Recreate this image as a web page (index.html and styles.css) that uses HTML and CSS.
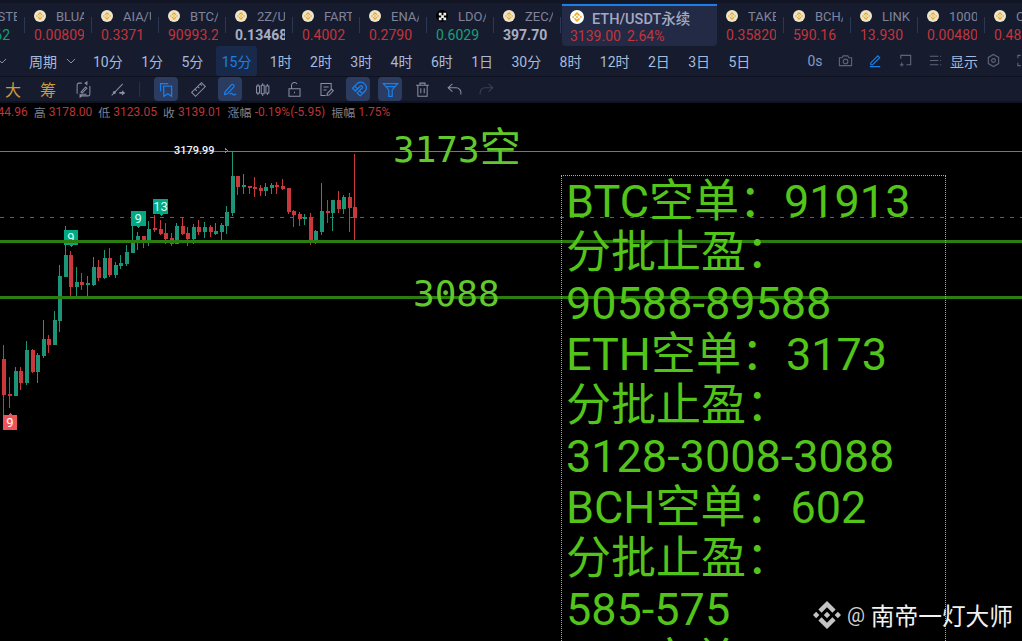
FILE: index.html
```html
<!DOCTYPE html>
<html lang="zh-CN">
<head>
  <meta charset="UTF-8" />
  <title>ETH/USDT永续</title>
  <link rel="stylesheet" href="styles.css">
</head>
<body>
  <svg class="defs" width="0" height="0">
    <symbol id="bnb" viewBox="0 0 126.61 126.61">
      <path d="M38.73 53.2l24.59-24.58 24.6 24.6 14.3-14.31L63.32 0 24.42 38.9zM0 63.31l14.3-14.31 14.31 14.31-14.31 14.3zM38.73 73.41l24.59 24.59 24.6-24.6 14.31 14.29-38.9 38.91-38.91-38.88zM98 63.31l14.3-14.31 14.31 14.3-14.31 14.32zM77.83 63.3L63.32 48.78 52.59 59.51l-1.24 1.23-2.54 2.54 14.51 14.5 14.51-14.52z"/>
    </symbol>
  </svg>

  <!-- coin tabs -->
  <div class="tabs">
    <div class="coin first"><div class="coin-top"><span class="dot"><svg><use href="#bnb"/></svg></span><span class="name">USTE/USDT</span></div><div class="price up">0.3462</div></div>
    <i class="sep"></i>
    <div class="coin"><div class="coin-top"><span class="dot"><svg><use href="#bnb"/></svg></span><span class="name">BLUAI/USDT</span></div><div class="price down">0.00809</div></div>
    <i class="sep"></i>
    <div class="coin"><div class="coin-top"><span class="dot"><svg><use href="#bnb"/></svg></span><span class="name">AIA/USDT</span></div><div class="price down">0.3371</div></div>
    <i class="sep"></i>
    <div class="coin"><div class="coin-top"><span class="dot"><svg><use href="#bnb"/></svg></span><span class="name">BTC/USDT</span></div><div class="price down">90993.2</div></div>
    <i class="sep"></i>
    <div class="coin"><div class="coin-top"><span class="dot"><svg><use href="#bnb"/></svg></span><span class="name">2Z/USDT</span></div><div class="price flat">0.13468</div></div>
    <i class="sep"></i>
    <div class="coin"><div class="coin-top"><span class="dot"><svg><use href="#bnb"/></svg></span><span class="name">FARTCOIN</span></div><div class="price down">0.4002</div></div>
    <i class="sep"></i>
    <div class="coin"><div class="coin-top"><span class="dot"><svg><use href="#bnb"/></svg></span><span class="name">ENA/USDT</span></div><div class="price down">0.2790</div></div>
    <i class="sep"></i>
    <div class="coin"><div class="coin-top"><span class="dot dark"><svg viewBox="0 0 12 12"><path d="M2 2h3v3H2zM7 2h3v3H7zM2 7h3v3H2zM7 7h3v3H7zM4.500 4.500h3v3h-3z"/></svg></span><span class="name">LDO/USDT</span></div><div class="price up">0.6029</div></div>
    <i class="sep"></i>
    <div class="coin"><div class="coin-top"><span class="dot"><svg><use href="#bnb"/></svg></span><span class="name">ZEC/USDT</span></div><div class="price flat">397.70</div></div>
    <i class="sep"></i>
    <div class="coin-active">
      <div class="coin-top"><span class="dot white"><svg><use href="#bnb"/></svg></span><span class="active-name">ETH/USDT永续</span></div>
      <div class="active-price"><span>3139.00</span><span>2.64%</span></div>
    </div>
    <div class="coin"><div class="coin-top"><span class="dot"><svg><use href="#bnb"/></svg></span><span class="name">TAKE/USDT</span></div><div class="price down">0.35820</div></div>
    <i class="sep"></i>
    <div class="coin"><div class="coin-top"><span class="dot"><svg><use href="#bnb"/></svg></span><span class="name">BCH/USDT</span></div><div class="price down">590.16</div></div>
    <i class="sep"></i>
    <div class="coin"><div class="coin-top"><span class="dot"><svg><use href="#bnb"/></svg></span><span class="name">LINK/USDT</span></div><div class="price down">13.930</div></div>
    <i class="sep"></i>
    <div class="coin"><div class="coin-top"><span class="dot"><svg><use href="#bnb"/></svg></span><span class="name">1000PEPE</span></div><div class="price down">0.00480</div></div>
    <i class="sep"></i>
    <div class="coin"><div class="coin-top"><span class="dot"><svg><use href="#bnb"/></svg></span><span class="name">OP/USDT</span></div><div class="price down">0.4812</div></div>
  </div>

  <!-- period bar -->
  <div class="periods">
    <svg class="chev cut" viewBox="0 0 10 10"><path d="M1 3l4 4 4-4"/></svg>
    <span class="period-label">周期</span>
    <svg class="chev" viewBox="0 0 10 10"><path d="M1 3l4 4 4-4"/></svg>
    <div class="period-list">
      <span class="period">10分</span>
      <span class="period">1分</span>
      <span class="period">5分</span>
      <span class="period on">15分</span>
      <span class="period">1时</span>
      <span class="period">2时</span>
      <span class="period">3时</span>
      <span class="period">4时</span>
      <span class="period">6时</span>
      <span class="period">1日</span>
      <span class="period">30分</span>
      <span class="period">8时</span>
      <span class="period">12时</span>
      <span class="period">2日</span>
      <span class="period">3日</span>
      <span class="period">5日</span>
    </div>
    <div class="period-right">
      <span class="rbtn blue-text">0s</span>
      <span class="rbtn"><svg viewBox="0 0 16 16"><path d="M1.500 5h3l1-2h5l1 2h3v8.500h-13z"/><circle cx="8" cy="9" r="2.500"/></svg></span>
      <span class="rbtn blue"><svg viewBox="0 0 16 16"><path d="M3 10.500L10.500 3l2 2L5 12.500H3zM2 14.500h11"/></svg></span>
      <span class="rbtn"><svg viewBox="0 0 16 16"><path d="M5 2.500h8.500v10H9M4 10v4.500M2 12.500h4M3 6V2.500h2"/></svg></span>
      <span class="rbtn"><svg viewBox="0 0 16 16"><path d="M2 3.500h9M2 8h9M2 12.500h9M13 3.500h1M13 8h1M13 12.500h1"/></svg></span>
      <span class="rbtn blue-text big">显示</span>
      <span class="rbtn"><svg viewBox="0 0 16 16"><path d="M8 1.500l5.500 3.200v6.600L8 14.500l-5.500-3.200V4.700z"/><circle cx="8" cy="8" r="2"/></svg></span>
      <span class="rbtn"><svg viewBox="0 0 16 16"><path d="M2 5.500V2.500h3M14 5.500V2.500h-3M2 10.500v3h3"/></svg></span>
    </div>
  </div>

  <!-- drawing tools -->
  <div class="tools">
    <div class="tools-left">
      <span class="tool gold">大</span>
      <span class="tool gold">筹</span>
      <span class="tool"><svg viewBox="0 0 20 20"><path d="M8 2.500H4.500a2 2 0 0 0-2 2V15M12 2.500l2-1.500v3zM17.500 6v9.500a2 2 0 0 1-2 2H6M8 17.500l-2 1.500v-3zM7 13l5.500-6 1.500 1.500L8.500 14zM7 15.500h6.500"/></svg></span>
      <span class="tool"><svg viewBox="0 0 20 20"><path d="M2 17L15 3.500"/><circle cx="5" cy="13.500" r="1.200"/><path class="solid" d="M11 13h3v-2l4 3-4 3v-2h-3z"/></svg></span>
    </div>
    <i class="tool-sep"></i>
    <div class="tools-right">
      <span class="tool on blue"><svg viewBox="0 0 20 20"><path d="M3 12V3h9M6.500 6H16v12l-4.500-3L7 18z"/></svg></span>
      <span class="tool"><svg viewBox="0 0 20 20"><path d="M2 13.500L13.500 2 18 6.500 6.500 18zM6 9.500l2 2M9 6.500l2 2M12 3.500l2 2"/></svg></span>
      <span class="tool on blue"><svg viewBox="0 0 20 20"><path d="M3.500 13L11 4.500a2 2 0 0 1 3 2.500L6.500 15l-3.500 1zM9 15.500c2-1.500 3-1 3.500 0s2 1.500 4-.5"/></svg></span>
      <span class="tool"><svg viewBox="0 0 20 20"><path d="M3 6h3.500v8H3zM8.500 5H12v10H8.500zM14 6h3.500v8H14zM4.700 3.500V6M4.700 14v2.500M10.200 2.500V5M10.200 15v2.500M15.700 3.500V6M15.700 14v2.500"/></svg></span>
      <span class="tool"><svg viewBox="0 0 20 20"><path d="M3.500 9h13v9h-13zM6.500 9V5a3.500 3.500 0 0 1 6.500-1.500M10 12.500v2"/></svg></span>
      <span class="tool"><svg viewBox="0 0 20 20"><path d="M9 17H3.500V3h12v6M6.500 7h6M6.500 10.500h3.500M10.500 17l.5-2.500 5-5 2 2-5 5z"/></svg></span>
      <span class="tool on blue"><svg viewBox="0 0 20 20"><path d="M3 8.500L9 2.500a6.500 6.500 0 0 1 9 9l-6 6-3.500-3.500 6-6a1.600 1.600 0 0 0-2.200-2.200l-6 6zM5.500 6l3.500 3.500M11.500 12l3.500 3"/></svg></span>
      <span class="tool on blue"><svg viewBox="0 0 20 20"><path d="M1.500 3h17l-6.500 7.500V18h-4v-7.500zM5 6.500h10"/></svg></span>
      <span class="tool"><svg viewBox="0 0 20 20"><path d="M2.500 5h15M7 5V2.500h6V5M4.500 5v13h11V5M8 8.500v6M12 8.500v6"/></svg></span>
      <span class="tool"><svg viewBox="0 0 20 20"><path d="M7.500 3.500L2.500 8l5 4.500M2.500 8H12a5.500 5.500 0 0 1 5.500 6v2"/></svg></span>
      <span class="tool dim"><svg viewBox="0 0 20 20"><path d="M12.500 3.500L17.500 8l-5 4.500M17.500 8H8a5.500 5.500 0 0 0-5.500 6v2"/></svg></span>
    </div>
  </div>

  <!-- ohlc line -->
  <div class="ohlc">
    <b>3144.96</b><span>高</span><b>3178.00</b><span>低</span><b>3123.05</b><span>收</span><b>3139.01</b><span>涨幅</span><b>-0.19%(-5.95)</b><span>振幅</span><b>1.75%</b>
  </div>

  <!-- chart -->
  <div class="chart">
    <svg class="plot" viewBox="0 118 1022 523" width="1022" height="523">
      <path class="last-line" d="M0 151.500H1022"/>
      <path class="now-line" d="M0 217.500H1022"/>

      <path class="wick red" d="M3.500 345V430M9.500 377V408M20.500 367V390M32.500 349V373M48.500 335V353M70.500 251V296M81.500 273V290M98.500 260V281M109.500 248V277M143.500 236V248M154.500 215V232M160.500 220V235M165.500 223V244M171.500 233V246M182.500 217V235M187.500 227V246M198.500 220V235M210.500 225V237M237.500 176V195M249.500 186V194M254.500 177V197M260.500 185V196M276.500 182V194M282.500 179V190M288.500 188V214M293.500 210V227M299.500 212V226M310.500 213V245M327.500 200V223M338.500 191V213M349.500 193V232M354.500 154V243"/>
      <path class="body red" d="M3.500 359V395M9.500 394V396M20.500 371V383M32.500 350V372M48.500 339V345M70.500 255V287M81.500 282V285M98.500 267V278M109.500 258V275M143.500 236V241M154.500 228V230M160.500 229V234M165.500 233V239M171.500 238V244M182.500 226V234M187.500 233V239M198.500 227V232M210.500 227V232M237.500 176V187M249.500 186V188M254.500 187V189M260.500 188V191M276.500 185V187M282.500 186V189M288.500 188V212M293.500 211V215M299.500 214V219M310.500 217V241M327.500 211V213M338.500 200V209M349.500 197V208M354.500 207V218"/>
      <path class="wick green" d="M15.500 367V396M26.500 341V385M37.500 353V383M43.500 320V358M54.500 311V345M59.500 265V332M65.500 226V277M76.500 267V297M87.500 276V297M93.500 257V286M104.500 250V279M115.500 262V278M120.500 255V269M126.500 245V266M132.500 225V253M137.500 232V250M148.500 221V246M176.500 223V244M193.500 224V244M204.500 222V238M215.500 223V235M221.500 223V241M226.500 206V234M232.500 152V216M243.500 174V194M265.500 183V196M271.500 183V194M304.500 214V225M315.500 230V244M321.500 183V235M332.500 200V231M343.500 195V214"/>
      <path class="body green" d="M15.500 371V396M26.500 350V383M37.500 355V372M43.500 339V356M54.500 320V345M59.500 276V321M65.500 255V277M76.500 282V287M87.500 283V285M93.500 267V285M104.500 258V278M115.500 265V275M120.500 263V266M126.500 252V264M132.500 242V253M137.500 236V242M148.500 229V241M176.500 226V244M193.500 227V239M204.500 227V232M215.500 231V234M221.500 225V232M226.500 212V226M232.500 176V213M243.500 185V187M265.500 187V191M271.500 185V188M304.500 217V219M315.500 231V241M321.500 211V232M332.500 200V213M343.500 197V209"/>

      <path class="flag-green" d="M64 230h14v15h-5l-2 2-2-2h-5z"/>
      <text class="flag-text" x="71" y="242">9</text>
      <path class="flag-green" d="M131 211h14.500v15h-5l-2 2-2-2h-5.500z"/>
      <text class="flag-text" x="138.200" y="223">9</text>
      <path class="flag-green" d="M153 199h15v15h-5l-2 2-2-2h-6z"/>
      <text class="flag-text" x="160.500" y="211">13</text>
      <path class="flag-red" d="M3 415h5l2-2 2 2h5v15H3z"/>
      <text class="flag-text white" x="10" y="427">9</text>

      <path class="hline" d="M0 241.500H1022M0 297.500H1022"/>

      <text class="high-label" x="174" y="154">3179.99</text>
      <path class="high-arrow" d="M225 148.500l2.500 2-2.500 2"/>
    </svg>

    <div class="note note-entry">3173<span>空</span></div>
    <div class="note note-target">3088</div>

    <div class="plan">
      <div>BTC空单：91913</div>
      <div>分批止盈：</div>
      <div>90588-89588</div>
      <div>ETH空单：3173</div>
      <div>分批止盈：</div>
      <div>3128-3008-3088</div>
      <div>BCH空单：602</div>
      <div>分批止盈：</div>
      <div>585-575</div>
      <div>SOL空单：</div>
    </div>

    <div class="mark">
      <svg class="mark-logo"><use href="#bnb"/></svg>
      <span class="mark-at">@</span>
      <span>南帝一灯大师</span>
    </div>
  </div>
</body>
</html>
```

FILE: styles.css
```css
* {
  box-sizing: border-box;
}
body {
  margin: 0;
  width: 1022px;
  height: 641px;
  overflow: hidden;
  display: flex;
  flex-direction: column;
  background-color: #000;
  font-family: Roboto, "Noto Sans CJK SC", sans-serif;
}
.defs {
  position: absolute;
}

/* coin tabs */
.tabs {
  height: 46px;
  flex-shrink: 0;
  display: flex;
  align-items: center;
  padding-top: 4px;
  background-color: #171b2e;
  box-shadow: inset 0 3px 0 #121523;
}
.coin {
  width: 66px;
  flex-shrink: 0;
  height: 42px;
  padding: 4px 0 0 9px;
}
.coin.first {
  margin-left: -42px;
}
.sep {
  width: 1px;
  height: 16px;
  flex-shrink: 0;
  background-color: #2c3655;
}
.coin-top {
  display: flex;
  align-items: center;
  height: 16px;
  gap: 10px;
}
.dot {
  width: 12px;
  height: 12px;
  flex-shrink: 0;
  display: flex;
  align-items: center;
  justify-content: center;
  border-radius: 50%;
  background-color: #efe5cb;
  fill: #e2a92e;
}
.dot svg {
  width: 8px;
  height: 8px;
}
.dot.dark {
  background-color: #000;
  fill: #eee;
}
.dot.dark svg {
  width: 11px;
  height: 11px;
}
.dot.white {
  width: 14px;
  height: 14px;
  background-color: #fff;
  fill: #f0a81c;
}
.dot.white svg {
  width: 10px;
  height: 10px;
}
.name {
  width: 28px;
  overflow: hidden;
  white-space: nowrap;
  font-size: 13px;
  color: #7f849c;
}
.price {
  width: 50px;
  margin-top: 3px;
  overflow: hidden;
  white-space: nowrap;
  font-size: 14px;
  line-height: 17px;
}
.down {
  color: #c1363b;
}
.up {
  color: #15a078;
}
.flat {
  color: #a9aec2;
  font-weight: 700;
}
.coin-active {
  width: 155px;
  height: 42px;
  flex-shrink: 0;
  margin-left: 1px;
  padding: 3px 0 0 8px;
  background-color: #232a45;
  border-top: 2px solid #1a7fe8;
  border-radius: 0 0 4px 4px;
}
.coin-active .coin-top {
  gap: 8px;
}
.active-name {
  font-size: 14.500px;
  font-weight: 500;
  color: #a3a9c2;
  white-space: nowrap;
}
.active-price {
  display: flex;
  gap: 6px;
  margin-top: 3px;
  font-size: 14px;
  line-height: 17px;
  color: #c1363b;
}

/* period bar */
.periods {
  height: 31px;
  flex-shrink: 0;
  display: flex;
  align-items: center;
  padding-bottom: 1px;
  background-color: #171b2e;
  border-bottom: 1px solid #0f1220;
  font-size: 14px;
  color: #a5bbdd;
}
.chev {
  width: 10px;
  height: 10px;
  fill: none;
  stroke: #8b90a5;
  stroke-width: 1;
}
.chev.cut {
  margin-left: -3px;
  flex-shrink: 0;
}
.period-label {
  margin-left: 22px;
  margin-right: 9px;
  white-space: nowrap;
}
.period-list {
  display: flex;
  align-items: stretch;
  height: 30px;
  gap: 6.400px;
  margin-left: 11px;
}
.period {
  display: flex;
  align-items: center;
  padding: 0 6px;
  white-space: nowrap;
}
.period.on {
  background-color: #19294a;
  color: #1a7fe8;
  border-radius: 3px;
}
.period-right {
  display: flex;
  align-items: center;
  margin-left: auto;
  margin-right: -16px;
  flex-shrink: 0;
}
.rbtn {
  width: 30px;
  flex-shrink: 0;
  display: flex;
  justify-content: center;
  align-items: center;
  white-space: nowrap;
}
.rbtn svg {
  width: 15px;
  height: 15px;
  fill: none;
  stroke: #5f6478;
  stroke-width: 1.200;
}
.rbtn.blue svg {
  stroke: #1a7fe8;
}
.blue-text {
  font-size: 14px;
  color: #7d9cc8;
}
.blue-text.big {
  color: #a5bbdd;
  width: 28px;
}

/* drawing tools */
.tools {
  height: 26px;
  flex-shrink: 0;
  display: flex;
  align-items: center;
  padding-left: 1px;
  background-color: #171b2e;
  border-bottom: 2px solid #0f1220;
}
.tools-left {
  display: flex;
  gap: 11px;
}
.tools-right {
  display: flex;
  gap: 8px;
}
.tool {
  width: 24px;
  height: 24px;
  display: flex;
  align-items: center;
  justify-content: center;
  border-radius: 4px;
  font-size: 16px;
}
.tool svg {
  width: 17px;
  height: 17px;
  fill: none;
  stroke: #8b90a5;
  stroke-width: 1.200;
}
.tool .solid {
  fill: #8b90a5;
  stroke: none;
}
.tool.gold {
  color: #cf9b38;
}
.tool.on {
  background-color: #2c3b60;
}
.tool.blue svg {
  stroke: #1a7fe8;
  stroke-width: 1.500;
}
.tool.dim svg {
  stroke: #3a3f52;
}
.tool-sep {
  width: 1px;
  height: 15px;
  margin: 0 14px 0 9px;
  background-color: #2a2f44;
}

/* ohlc line */
.ohlc {
  height: 15px;
  flex-shrink: 0;
  display: flex;
  align-items: center;
  padding-top: 3px;
  white-space: nowrap;
  margin-left: -16px;
  font-size: 12px;
  color: #7d8292;
}
.ohlc b {
  font-weight: 400;
  color: #bb3539;
  margin-right: 6px;
}
.ohlc span {
  margin-right: 3px;
}

/* chart */
.chart {
  position: relative;
  flex: 1;
  overflow: hidden;
  background-color: #000;
}
.plot {
  position: absolute;
  left: 0;
  top: 0;
  shape-rendering: crispEdges;
}
.last-line {
  stroke: #f2404c;
  stroke-width: 1;
}
.now-line {
  stroke: #c4343a;
  stroke-width: 1;
  stroke-dasharray: 4 6;
}
.wick {
  fill: none;
  stroke-width: 1;
}
.body {
  fill: none;
  stroke-width: 4;
}
.wick.red, .body.red {
  stroke: #c9383d;
}
.wick.green, .body.green {
  stroke: #1b9477;
}
.flag-green {
  fill: #00a884;
}
.flag-red {
  fill: #ee5358;
}
.flag-text {
  font-size: 13px;
  fill: #d6fff1;
  text-anchor: middle;
}
.flag-text.white {
  fill: #fff;
}
.hline {
  fill: none;
  stroke: #2a7d0e;
  stroke-width: 3;
}
.high-label {
  font-size: 11px;
  font-weight: 500;
  fill: #f0f3fa;
}
.high-arrow {
  fill: none;
  stroke: #8a8f9c;
  stroke-width: 1;
}
.note {
  position: absolute;
  font-family: "DejaVu Sans Mono", "Noto Sans CJK SC", monospace;
  font-size: 36px;
  line-height: 42px;
  color: #62c92c;
  white-space: nowrap;
}
.note span {
  font-family: "Noto Sans CJK SC", sans-serif;
  font-size: 41px;
}
.note-entry {
  left: 393px;
  top: 5px;
}
.note-target {
  left: 413px;
  top: 155px;
}
.plan {
  position: absolute;
  left: 561px;
  top: 57px;
  width: 385px;
  height: 520px;
  padding: 0 0 0 4px;
  border: 1px dotted #a8a8b4;
  font-size: 45px;
  line-height: 51px;
  color: #52c41a;
  white-space: nowrap;
}
.mark {
  position: absolute;
  right: 9px;
  top: 481px;
  display: flex;
  align-items: center;
  height: 32px;
  font-size: 23.700px;
  color: #f2f2f2;
}
.mark-logo {
  width: 28px;
  height: 28px;
  fill: #c4c4c4;
}
.mark-at {
  margin: 0 6px;
  font-size: 20px;
  color: #d0d0d0;
}
```
